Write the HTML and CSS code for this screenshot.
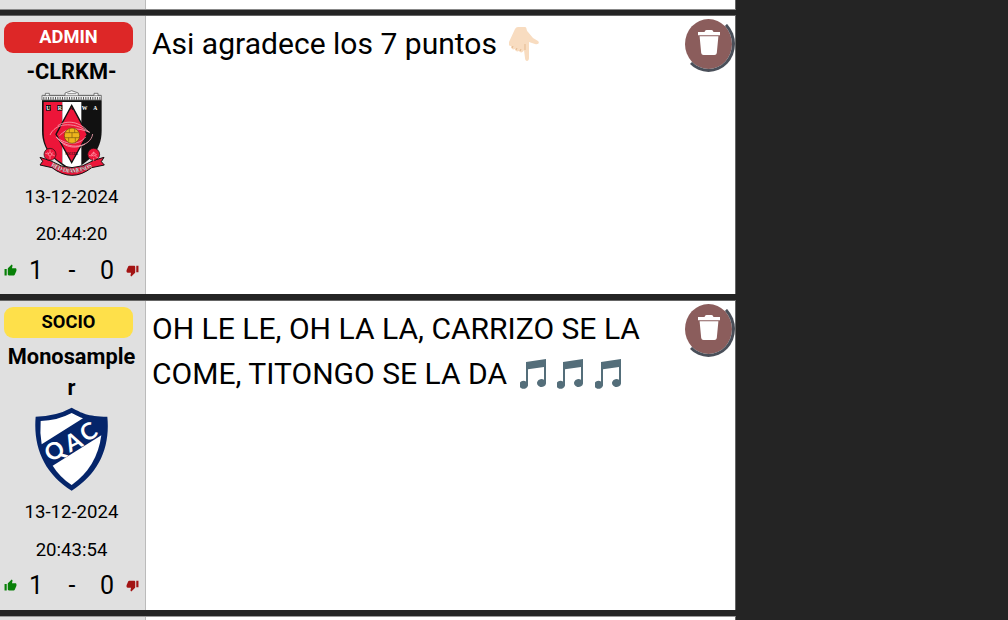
FILE: index.html
```html
<!DOCTYPE html>
<html lang="es">
<head>
<meta charset="utf-8">
<title>Foro</title>
<link rel="stylesheet" href="styles.css">
</head>
<body>
<svg class="defs" aria-hidden="true">
  <symbol id="thumb" viewBox="0 0 24 24"><path d="M1 21h4V9H1v12zm22-11c0-1.1-.9-2-2-2h-6.3l1-4.600v-.3c0-.4-.2-.8-.4-1.100L14.200 1 7.600 7.600C7.200 8 7 8.500 7 9v10c0 1.100.9 2 2 2h9c.8 0 1.500-.5 1.800-1.200l3-7.100c.1-.2.200-.5.200-.7v-2z"/></symbol>
  <symbol id="trash" viewBox="0 0 24 27"><path d="M1 3h6.500q.5-2 2-2h5q1.500 0 2 2H23v3.200H1zM2.600 7.300h18.800L19.800 24q-.3 2-2.300 2h-11q-2 0-2.300-2z"/></symbol>
  <symbol id="note" viewBox="0 0 26 32"><path d="M6 3 26 0v24.500a4.500 4 0 1 1-2-3.800V8L8 10.300v16.200A4.500 4 0 1 1 6 22.500z"/></symbol>
</svg>
<main class="feed">
  <article class="post post-prev"><div class="side"></div><div class="body"></div></article>

  <article class="post post-a">
    <div class="side">
      <div class="badge admin">ADMIN</div>
      <div class="name">-CLRKM-</div>
      <svg class="crest" viewBox="15 18 222 264">
        <path d="M36 48V34h10v-6h12v6h47v-7l20-7 20 7v7h47v-6h12v6h10v14z" fill="#f5f5f5" stroke="#444" stroke-width="2"/>
        <path d="M40 43h172" stroke="#555" stroke-width="8" stroke-dasharray="3 4"/>
        <path d="M40 35h172M112 29h27" stroke="#555" stroke-width="2"/>
        <path d="M36 49h179v91c0 62-38 91-89 121-51-30-90-59-90-121z" fill="#111"/>
        <path d="M41 54h56v184C61 218 41 188 41 145z" fill="#ed1539"/>
        <path d="M97 54h57v190l-28 14-29-20z" fill="#fff"/>
        <path d="M48 63h15v17H48zM82 63h15v17H82z" fill="#111"/>
        <path d="M125 64 172 151 125 236 78 151z" fill="#ed1539" stroke="#111" stroke-width="4"/>
        <g fill="none" stroke="#f7a4b2" stroke-width="2.500"><path d="M60 153c15-34 65-44 119-8-35-15-70-15-90 10M188 150c-5 39-72 53-109 10 31 23 66 25 88-1M83 125c28-18 65-13 92 18M165 180c-30 18-66 9-86-22"/></g>
        <circle cx="126" cy="155" r="23" fill="#edb51c" stroke="#67460b" stroke-width="2"/>
        <path d="M107 146h38M105 161h42M118 135v11m16-11v11m-8 0v15m-10 0v12m20-12v12" stroke="#795611" stroke-width="2"/>
        <g class="urawa"><text x="49" y="78">U</text><text x="83" y="78">R</text><text x="118" y="78" class="ink">A</text><text x="155" y="78">W</text><text x="190" y="78">A</text></g>
        <path d="M30 220 61 230q65 42 130-1l31-9-8 13 9 10-38 8q-59 46-119 0l-36-8 8-11z" fill="#ed1539" stroke="#111" stroke-width="3"/>
        <g fill="#ed1539" stroke="#111" stroke-width="2"><circle cx="60" cy="211" r="18"/><circle cx="191" cy="211" r="18"/></g>
        <g fill="none" stroke="#ffacb6" stroke-width="2"><circle cx="60" cy="211" r="5"/><circle cx="191" cy="211" r="5"/><path d="M60 197v9m0 10v9m-14-17 9 2m10 2 9 3m-22-10 5 4m13-4-5 4m126-6v9m0 10v9m-14-17 9 2m10 2 9 3m-22-10 5 4m13-4-5 4"/></g>
        <path id="ribbon" d="M62 246q63 40 130 0" fill="none"/>
        <text class="reds"><textPath href="#ribbon" textLength="132">RED-DIAMONDS</textPath></text>
        <text x="106" y="213" class="soccer">SOCCER</text>
      </svg>
      <div class="stamp">13-12-2024</div>
      <div class="stamp">20:44:20</div>
      <div class="votes"><svg class="up"><use href="#thumb"/></svg><span>1</span><span>-</span><span>0</span><svg class="down"><use href="#thumb"/></svg></div>
    </div>
    <div class="body">
      <p class="text">Asi agradece los 7 puntos <svg class="hand" viewBox="0 0 30 36"><path d="M6 2Q7 0 9 0h7c2 0 1 3 3 5l5 6 5 3c2 2 0 4-3 3l-6-2v16c0 4-4 4-4 0l-1-8c-1 3-4 3-5 1-2 1-4 0-4-2-2 1-4 0-4-3-2 0-3-1-2-4Z" fill="#f8dcc0"/><path d="m4 19-1 2m5 0-1 2m5-1-1 2m5-7v6" fill="none" stroke="#e4b98f" stroke-width="1"/></svg></p>
      <button class="del" aria-label="Borrar"><svg><use href="#trash"/></svg></button>
    </div>
  </article>

  <article class="post post-b">
    <div class="side">
      <div class="badge socio">SOCIO</div>
      <div class="name">Monosampler</div>
      <svg class="crest" viewBox="27 18 228 264">
        <path d="M140 23q-47 26-108 27c-8 92 26 171 108 222 82-51 116-130 107-222-61-1-76-11-107-27z" fill="#05256a"/>
        <path d="M47 63q50-1 93-24 22 12 34 16L50 133q-6-35-3-70z" fill="#fff"/>
        <path d="M229 106q-13 96-89 149-36-24-57-58z" fill="#fff"/>
        <g class="qac"><text transform="translate(77 188) rotate(-32)">Q</text><text transform="translate(134 158) rotate(-27)">A</text><text transform="translate(183 128) rotate(-31)">C</text></g>
      </svg>
      <div class="stamp">13-12-2024</div>
      <div class="stamp">20:43:54</div>
      <div class="votes"><svg class="up"><use href="#thumb"/></svg><span>1</span><span>-</span><span>0</span><svg class="down"><use href="#thumb"/></svg></div>
    </div>
    <div class="body">
      <p class="text">OH LE LE, OH LA LA, CARRIZO SE LA<br>COME, TITONGO SE LA DA <span class="notes"><svg><use href="#note"/></svg><svg><use href="#note"/></svg><svg><use href="#note"/></svg></span></p>
      <button class="del" aria-label="Borrar"><svg><use href="#trash"/></svg></button>
    </div>
  </article>

  <article class="post post-next"><div class="side"></div><div class="body"><button class="del" aria-label="Borrar"></button></div></article>
</main>
</body>
</html>
```

FILE: styles.css
```css
* { box-sizing: border-box; }
body { margin: 0; height: 620px; overflow: hidden; background: #242424; color: #000; font-family: Roboto, sans-serif; }
.defs { display: none; }
.feed { width: 736px; display: flex; flex-direction: column; gap: 6px; }
.post { display: flex; flex: none; width: 736px; background: #fff; border-right: 1px solid #656565; }
.post-prev { height: 10px; border-bottom: 1px solid #888; }
.post-a { height: 279px; margin-top: -1px; border-top: 1px solid #656565; }
.post-b { height: 310px; border-top: 1px solid #656565; }
.post-next { height: 4px; overflow: hidden; border-top: 1px solid #999; }
.side { width: 146px; flex: none; background: #e0e0e0; border-right: 1px solid #bbb; padding: 6px 2px 0 0; display: flex; flex-direction: column; align-items: center; }
.post-prev .side, .post-next .side { padding: 0; }
.badge { width: 129px; height: 31px; margin: 0 0 3px -6px; border-radius: 9px; font-size: 18.300px; font-weight: 700; line-height: 30px; text-align: center; }
.admin { background: #dd2727; color: #fff; }
.socio { background: #fee04a; }
.name { width: 130px; font-size: 21.800px; font-weight: 700; line-height: 31px; text-align: center; overflow-wrap: anywhere; }
.crest { width: 74px; height: 88px; margin-top: 3px; flex: none; }
.post-a .crest { margin-bottom: 1px; }
.post-b .crest { width: 76px; }
.urawa { font: 700 17px "Liberation Serif", serif; fill: #fff; }
.urawa .ink { fill: #111; }
.reds { font: 700 19px "Liberation Serif", serif; fill: #fff; stroke: #111; stroke-width: .5px; }
.soccer { font: 700 9px "Liberation Serif", serif; fill: #111; }
.qac { font: 700 70px Lato, sans-serif; fill: #fff; }
.stamp { height: 37.500px; line-height: 37.500px; font-size: 18.600px; }
.post-a .stamp + .stamp { height: 37.500px; line-height: 35.500px; }
.votes { width: 135px; height: 33px; display: grid; grid-template-columns: 13px 37px 33px 35px 13px; align-items: center; justify-content: space-between; font-size: 25px; text-align: center; }
.votes span { position: relative; left: -.5px; }
.votes svg { width: 13px; height: 13px; }
.up { fill: #088008; }
.down { fill: #a31414; transform: rotate(180deg); }
.body { flex: 1; display: flex; justify-content: space-between; padding: 5px 0 0 6px; }
.text { margin: 0; font-size: 30.050px; line-height: 45px; white-space: nowrap; }
.hand { width: 30px; height: 36px; margin-left: 5px; vertical-align: -9px; }
.notes { display: inline-flex; gap: 11.500px; margin-left: 5px; vertical-align: -7px; }
.notes svg { width: 26px; height: 32px; fill: #546e7a; }
.del { width: 53px; height: 56px; margin: -5px 0 0; padding: 0; flex: none; display: flex; align-items: center; justify-content: center; border: 3px solid transparent; border-right-color: #4a4f59; border-bottom-color: #4a4f59; border-radius: 50%; background: #8b5d5c padding-box; }
.del svg { width: 24px; height: 27px; margin: -3px 0 0; fill: #fff; }
```
